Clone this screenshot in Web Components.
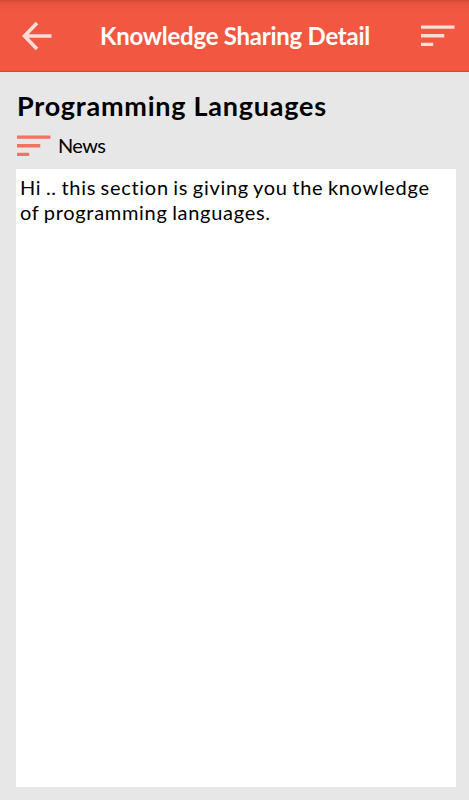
<!DOCTYPE html>
<html lang="en">
<head>
  <meta charset="UTF-8">
  <meta name="viewport" content="width=device-width, initial-scale=1.0">
  <title>Knowledge Sharing Detail</title>
  <style>
    body {
      margin: 0;
      background-color: #e7e7e7;
      color: #000;
      font-family: Lato, "Open Sans", sans-serif;
    }
  </style>
</head>
<body>
  <knowledge-page></knowledge-page>

  <script>
    class SortIcon extends HTMLElement {
      constructor() {
        super();
        this.shadowDOM = this.attachShadow({ mode: "open" });
      }

      connectedCallback() {
        this.shadowDOM.innerHTML = `
          <style>
            :host {
              display: block;
              width: 34px;
              height: 22px;
            }
            svg {
              display: block;
            }
          </style>
          <svg width="34" height="22" viewBox="0 0 34 22" fill="currentColor">
            <path d="M0 .5h33.5v3.3H0zM0 9.1h23.3v3.3H0zM0 17.8h12.2v3.2H0z"/>
          </svg>
        `;
      }
    }

    class AppBar extends HTMLElement {
      constructor() {
        super();
        this.shadowDOM = this.attachShadow({ mode: "open" });
      }

      connectedCallback() {
        this.shadowDOM.innerHTML = `
          <style>
            :host {
              display: block;
            }
            header {
              display: flex;
              align-items: center;
              justify-content: space-between;
              box-sizing: border-box;
              height: 72px;
              padding: 0 14px 0 20px;
              background: linear-gradient(#cb4a38, #e3523d 2px, #ee5640 7px, #f25841 13px);
              border-bottom: 1px solid #e04326;
              color: #ffdcd7;
            }
            .back {
              display: block;
            }
            h1 {
              margin: 0 3px 0 0;
              color: #fff;
              font-size: 24px;
              line-height: 30px;
              font-weight: bold;
              letter-spacing: -0.25px;
              white-space: nowrap;
            }
          </style>

          <header>
            <svg class="back" width="32" height="30" viewBox="0 0 32 30" fill="none" stroke="currentColor" stroke-width="3.6">
              <path d="M31.5 15H5M17 2 4.5 15 17 28"/>
            </svg>
            <h1><slot></slot></h1>
            <sort-icon></sort-icon>
          </header>
        `;
      }
    }

    class KnowledgePage extends HTMLElement {
      constructor() {
        super();
        this.shadowDOM = this.attachShadow({ mode: "open" });
      }

      connectedCallback() {
        this.shadowDOM.innerHTML = `
          <style>
            * {
              margin: 0;
              padding: 0;
              box-sizing: border-box;
            }
            :host {
              display: flex;
              flex-direction: column;
              height: 100vh;
            }
            main {
              flex: 1;
              display: flex;
              flex-direction: column;
              padding: 17px 13px 13px 16px;
            }
            h2 {
              padding-left: 1px;
              font-size: 27px;
              line-height: 34px;
              font-weight: bold;
              letter-spacing: 0.75px;
              white-space: nowrap;
            }
            .category {
              display: flex;
              align-items: center;
              gap: 7px;
              height: 46px;
              padding-left: 1px;
              font-size: 20px;
              letter-spacing: -0.6px;
            }
            .category sort-icon {
              color: #f27360;
            }
            .category span {
              padding-bottom: 2px;
            }
            .content {
              flex: 1;
              padding: 6px 4px;
              background-color: #fff;
              font-size: 20px;
              line-height: 25px;
              letter-spacing: 0.7px;
              word-spacing: -1.2px;
              white-space: nowrap;
            }
          </style>

          <app-bar>Knowledge Sharing Detail</app-bar>
          <main>
            <h2>Programming Languages</h2>
            <div class="category">
              <sort-icon></sort-icon>
              <span>News</span>
            </div>
            <p class="content">Hi .. this section is giving you the knowledge<br>of programming languages.</p>
          </main>
        `;
      }
    }

    customElements.define("sort-icon", SortIcon);
    customElements.define("app-bar", AppBar);
    customElements.define("knowledge-page", KnowledgePage);
  </script>
</body>
</html>
